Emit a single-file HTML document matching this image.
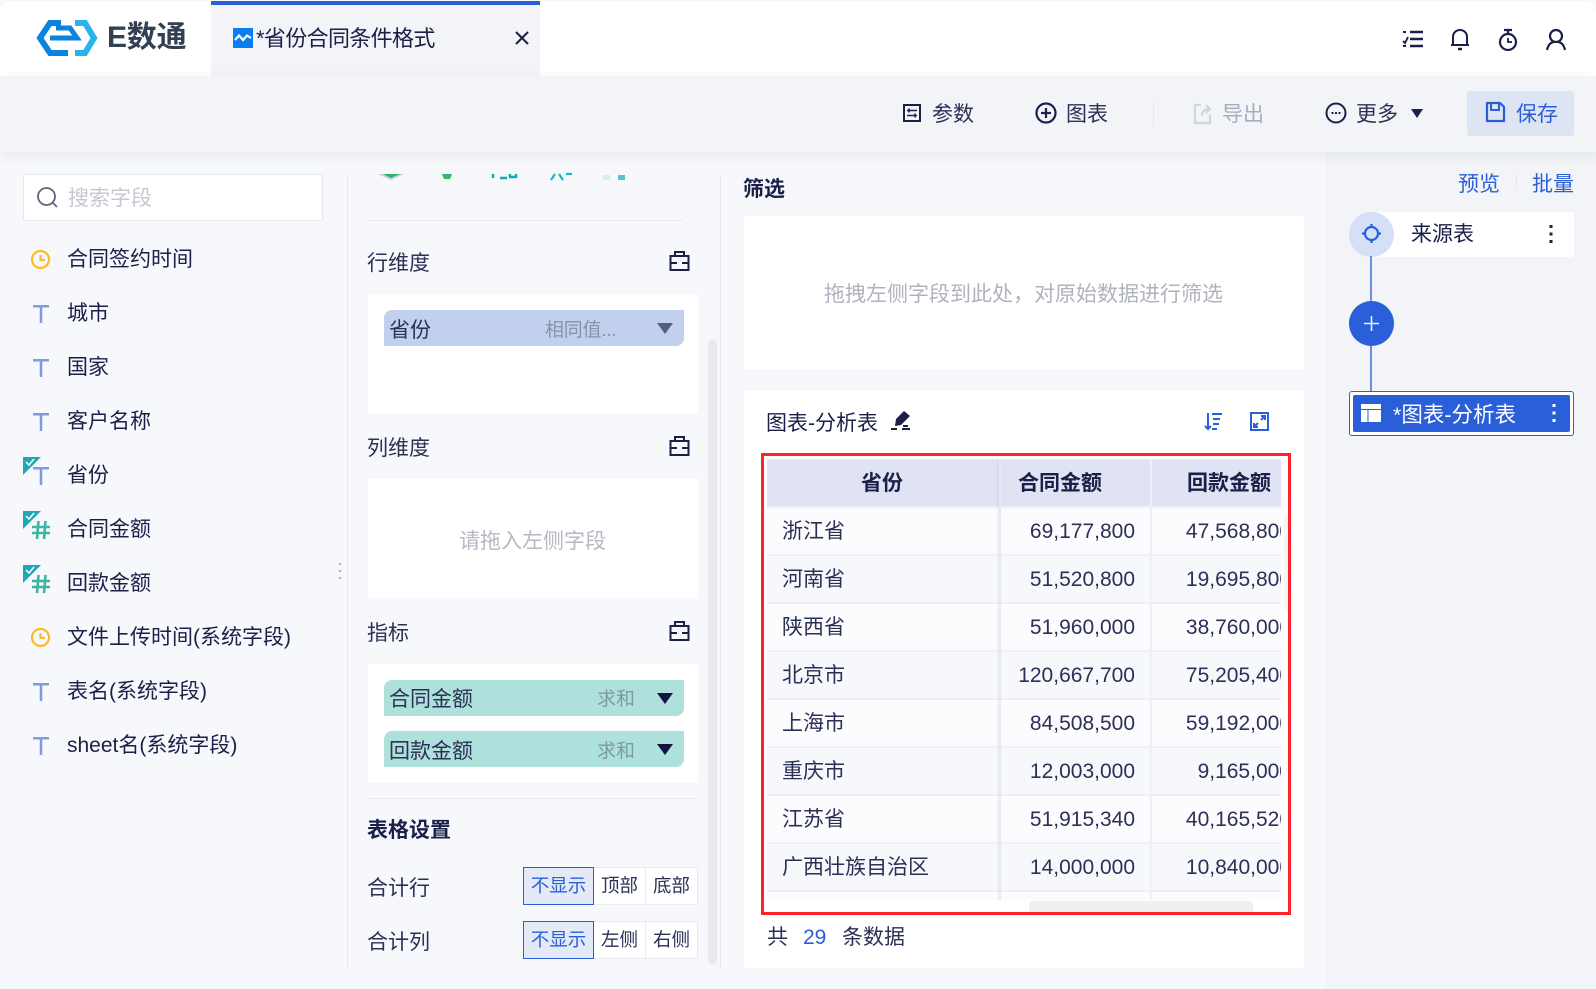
<!DOCTYPE html>
<html lang="zh-CN"><head><meta charset="utf-8"><title>省份合同条件格式</title>
<style>
*{box-sizing:border-box;margin:0;padding:0}
html,body{width:1596px;height:989px;overflow:hidden;background:#f7f8fb}
body{position:relative;font-family:"Liberation Sans","Noto Sans CJK SC",sans-serif;font-size:21px;color:#1a2048}
.a{position:absolute}
.t{position:absolute;white-space:nowrap;height:30px;line-height:30px;margin-top:1px}
svg{position:absolute;overflow:visible}
.w{position:absolute;background:#fff}
.pill{position:absolute;left:384px;width:300px;height:36px;border-radius:8px 0 8px 0}
.b{font-weight:bold}
.btn{position:absolute;height:38px;border:1px solid #e8eaf0;background:#fff;text-align:center;line-height:35px;font-size:18.500px;color:#2b3055}
.on{border:1.500px solid #2b5fd9;background:#e3e9f7;color:#2b5fd9;z-index:2}
</style></head><body>

<!-- header -->
<div class="w" style="left:0;top:1px;width:1596px;height:75px;border-radius:12px 12px 0 0"></div>
<div class="a" style="left:211px;top:1px;width:329px;height:75px;background:#f2f4f8;border-top:4px solid #2b5fd9"></div>

<svg style="left:37px;top:20px" width="60" height="36" viewBox="0 0 60 36">
<path d="M24 3H13L3 18L13 33H31" fill="none" stroke="#0b83dc" stroke-width="6"/>
<path d="M13 18H40L33 8H19" fill="none" stroke="#0b83dc" stroke-width="5"/>
<path d="M38 3H48L57 18L48 33H38" fill="none" stroke="#27b4ec" stroke-width="6"/>
</svg>
<div class="t b" style="left:107px;top:22px;font-size:30px;color:#333f52;letter-spacing:-.2px">E数通</div>

<svg style="left:233px;top:28px" width="20" height="20" viewBox="0 0 20 20"><rect width="20" height="20" fill="#0a7df0"/><path d="M2 12L6 7.500L10 12L14 7.500L18 10" fill="none" stroke="#fff" stroke-width="2.200"/></svg>
<div class="t" style="left:256px;top:23px;font-size:22px;letter-spacing:-.65px">*省份合同条件格式</div>
<svg style="left:515px;top:31px" width="14" height="14" viewBox="0 0 14 14"><path d="M1 1L13 13M13 1L1 13" stroke="#1a2048" stroke-width="2"/></svg>

<svg style="left:1402px;top:29px" width="22" height="20" viewBox="0 0 22 20" fill="none" stroke="#1a2048" stroke-width="2.600"><path d="M8 3H21M8 10H21M8 17H21"/><path d="M1 3H4M1 17H4M1 12L3 14L6 8" stroke-width="1.900"/></svg>
<svg style="left:1450px;top:28px" width="20" height="23" viewBox="0 0 20 23" fill="none" stroke="#1a2048" stroke-width="2"><path d="M3 17V9C3 5 6 2 10 2C14 2 17 5 17 9V17H19H1Z"/><path d="M8 21H12" stroke-width="2.500"/></svg>
<svg style="left:1498px;top:28px" width="20" height="24" viewBox="0 0 20 24" fill="none" stroke="#1a2048" stroke-width="2.200"><circle cx="10" cy="14" r="8"/><path d="M6 2H14M10 2V6" /><path d="M10 10V14H14" stroke-width="1.800"/></svg>
<svg style="left:1545px;top:28px" width="22" height="23" viewBox="0 0 22 23" fill="none" stroke="#1a2048" stroke-width="2.200"><circle cx="11" cy="8" r="6"/><path d="M2 22C3 17 6 14 9 14M20 22C19 17 16 14 13 14"/></svg>

<!-- toolbar -->
<div class="a" style="left:0;top:76px;width:1596px;height:76px;background:#f2f4f8;box-shadow:0 4px 12px rgba(40,50,90,.08);z-index:1"></div>
<div style="position:absolute;left:0;top:0;z-index:2;width:1596px;height:152px">
<svg style="left:903px;top:104px" width="18" height="18" viewBox="0 0 18 18" fill="none" stroke="#1a2048" stroke-width="2"><rect x="1" y="1" width="16" height="16"/><path d="M4 6.500H14M4 11.500H14" stroke-width="1.600"/><path d="M6 4.500V8.500M12 9.500V13.500" stroke-width="1.600"/></svg>
<div class="t" style="left:932px;top:99px;color:#2b3055">参数</div>
<svg style="left:1035px;top:102px" width="22" height="22" viewBox="0 0 22 22" fill="none" stroke="#1a2048" stroke-width="2.200"><circle cx="11" cy="11" r="9.500"/><path d="M6 11H16M11 6V16"/></svg>
<div class="t" style="left:1066px;top:99px;color:#2b3055">图表</div>
<div class="a" style="left:1153px;top:102px;width:1px;height:24px;background:#e4e6ee"></div>
<svg style="left:1193px;top:103px" width="20" height="21" viewBox="0 0 20 21" fill="none" stroke="#d2d4de" stroke-width="2.200"><path d="M8 2H2V20H17V11"/><path d="M9 13C9 9 11 6 16 6M13 2L17 6L13 10"/></svg>
<div class="t" style="left:1222px;top:99px;color:#a8acbc">导出</div>
<svg style="left:1325px;top:102px" width="22" height="22" viewBox="0 0 22 22"><circle cx="11" cy="11" r="9.500" fill="none" stroke="#1a2048" stroke-width="2"/><path d="M6.500 11H8.500M10 11H12M13.500 11H15.500" stroke="#1a2048" stroke-width="2"/></svg>
<div class="t" style="left:1356px;top:99px;color:#2b3055">更多</div>
<svg style="left:1411px;top:109px" width="12" height="9" viewBox="0 0 12 9"><path d="M0 0H12L6 9Z" fill="#1a2048"/></svg>
<div class="a" style="left:1467px;top:91px;width:107px;height:45px;background:#dde4f4;border-radius:3px"></div>
<svg style="left:1486px;top:102px" width="19" height="20" viewBox="0 0 19 20" fill="none" stroke="#2b5fd9" stroke-width="2.200"><path d="M1 1H14L18 5V19H1Z"/><path d="M5 1V8H13V1" stroke-width="2"/></svg>
<div class="t" style="left:1516px;top:99px;color:#2b5fd9">保存</div>
</div>

<!-- left panel -->
<div class="w" style="left:23px;top:174px;width:300px;height:47px;border:1px solid #e6e8ef;border-radius:2px"></div>
<svg style="left:36px;top:186px" width="23" height="23" viewBox="0 0 23 23" fill="none" stroke="#5c647e" stroke-width="1.800"><circle cx="10.500" cy="10.500" r="8.500"/><path d="M16.500 16.500L21 21"/></svg>
<div class="t" style="left:68px;top:183px;color:#c5c8d2">搜索字段</div>

<svg style="left:31px;top:250px" width="19" height="19" viewBox="0 0 19 19" fill="none" stroke="#fbbb29" stroke-width="2.200"><circle cx="9.500" cy="9.500" r="8.500"/><path d="M9.500 5V10H14"/></svg>
<div class="t" style="left:67px;top:244px">合同签约时间</div>
<svg style="left:33px;top:305px" width="16" height="18" viewBox="0 0 16 18"><path d="M0 1.200H16M8 1V18" stroke="#7d9be0" stroke-width="2.500"/></svg>
<div class="t" style="left:67px;top:298px">城市</div>
<svg style="left:33px;top:359px" width="16" height="18" viewBox="0 0 16 18"><path d="M0 1.200H16M8 1V18" stroke="#7d9be0" stroke-width="2.500"/></svg>
<div class="t" style="left:67px;top:352px">国家</div>
<svg style="left:33px;top:413px" width="16" height="18" viewBox="0 0 16 18"><path d="M0 1.200H16M8 1V18" stroke="#7d9be0" stroke-width="2.500"/></svg>
<div class="t" style="left:67px;top:406px">客户名称</div>

<svg style="left:33px;top:467px" width="16" height="18" viewBox="0 0 16 18"><path d="M0 1.200H16M8 1V18" stroke="#7d9be0" stroke-width="2.500"/></svg>
<svg style="left:23px;top:457px" width="18" height="18" viewBox="0 0 18 18"><path d="M0 0H18L0 18Z" fill="#1fa7b5"/><path d="M3 5L6 8L11 2" fill="none" stroke="#fff" stroke-width="1.500"/></svg>
<div class="t" style="left:67px;top:460px">省份</div>

<svg style="left:32px;top:521px" width="18" height="18" viewBox="0 0 18 18"><path d="M0 6H18M0 12H18M6.500 0L5 18M13.500 0L12 18" stroke="#3fb5a5" stroke-width="2.600" fill="none"/></svg>
<svg style="left:23px;top:511px" width="18" height="18" viewBox="0 0 18 18"><path d="M0 0H18L0 18Z" fill="#1fa7b5"/><path d="M3 5L6 8L11 2" fill="none" stroke="#fff" stroke-width="1.500"/></svg>
<div class="t" style="left:67px;top:514px">合同金额</div>

<svg style="left:32px;top:575px" width="18" height="18" viewBox="0 0 18 18"><path d="M0 6H18M0 12H18M6.500 0L5 18M13.500 0L12 18" stroke="#3fb5a5" stroke-width="2.600" fill="none"/></svg>
<svg style="left:23px;top:565px" width="18" height="18" viewBox="0 0 18 18"><path d="M0 0H18L0 18Z" fill="#1fa7b5"/><path d="M3 5L6 8L11 2" fill="none" stroke="#fff" stroke-width="1.500"/></svg>
<div class="t" style="left:67px;top:568px">回款金额</div>

<svg style="left:31px;top:628px" width="19" height="19" viewBox="0 0 19 19" fill="none" stroke="#fbbb29" stroke-width="2.200"><circle cx="9.500" cy="9.500" r="8.500"/><path d="M9.500 5V10H14"/></svg>
<div class="t" style="left:67px;top:622px">文件上传时间(系统字段)</div>
<svg style="left:33px;top:683px" width="16" height="18" viewBox="0 0 16 18"><path d="M0 1.200H16M8 1V18" stroke="#7d9be0" stroke-width="2.500"/></svg>
<div class="t" style="left:67px;top:676px">表名(系统字段)</div>
<svg style="left:33px;top:737px" width="16" height="18" viewBox="0 0 16 18"><path d="M0 1.200H16M8 1V18" stroke="#7d9be0" stroke-width="2.500"/></svg>
<div class="t" style="left:67px;top:730px">sheet名(系统字段)</div>

<svg style="left:338px;top:562px" width="4" height="18" viewBox="0 0 4 18"><path d="M2 1V3M2 8V10M2 15V17" stroke="#b5b8c4" stroke-width="2.500"/></svg>
<div class="a" style="left:347px;top:174px;width:1px;height:794px;background:#e8eaf0"></div>

<!-- middle panel -->
<svg style="left:378px;top:174px" width="270" height="7" viewBox="0 0 270 7">
<path d="M0 0H26L13 6Z" fill="#c9ccd3"/><path d="M5 0H22L13 4Z" fill="#2fb56a"/>
<path d="M64 0H74L72 5H66Z" fill="#2fba68"/>
<path d="M115 0V4M122 4H129M132 0V3H138V0" stroke="#11a9b3" stroke-width="2.400" fill="none"/>
<path d="M173 6L177 0M181 0L185 6M188 0H194" stroke="#19b7c4" stroke-width="2.200" fill="none"/>
<rect x="225" y="1" width="7" height="5" fill="#d2f0f3"/><rect x="240" y="1" width="7" height="5" fill="#55c3d0"/>
</svg>
<div class="a" style="left:367px;top:220px;width:316px;height:1px;background:#e8eaf0"></div>

<div class="t" style="left:367px;top:248px;color:#2b3055">行维度</div>
<svg style="left:669px;top:251px" width="21" height="20" viewBox="0 0 21 20" fill="none" stroke="#1a2048" stroke-width="2"><path d="M1.500 5H19.500V19H1.500ZM6 5V1H15V5M1.500 12H8M13 12H19.500"/></svg>
<div class="w" style="left:368px;top:294px;width:330px;height:119px"></div>
<div class="pill" style="top:310px;background:#c1d0ed"></div>
<div class="t" style="left:389px;top:315px;color:#2b3055">省份</div>
<div class="t" style="left:545px;top:315px;font-size:19px;color:#8a91ab;letter-spacing:-.25px">相同值...</div>
<svg style="left:657px;top:323px" width="16" height="11" viewBox="0 0 16 11"><path d="M0 0H16L8 11Z" fill="#555f85"/></svg>

<div class="t" style="left:367px;top:433px;color:#2b3055">列维度</div>
<svg style="left:669px;top:436px" width="21" height="20" viewBox="0 0 21 20" fill="none" stroke="#1a2048" stroke-width="2"><path d="M1.500 5H19.500V19H1.500ZM6 5V1H15V5M1.500 12H8M13 12H19.500"/></svg>
<div class="w" style="left:368px;top:479px;width:330px;height:119px"></div>
<div class="t" style="left:459px;top:526px;color:#b5b8c4">请拖入左侧字段</div>

<div class="t" style="left:367px;top:618px;color:#2b3055">指标</div>
<svg style="left:669px;top:621px" width="21" height="20" viewBox="0 0 21 20" fill="none" stroke="#1a2048" stroke-width="2"><path d="M1.500 5H19.500V19H1.500ZM6 5V1H15V5M1.500 12H8M13 12H19.500"/></svg>
<div class="w" style="left:368px;top:664px;width:330px;height:119px"></div>
<div class="pill" style="top:680px;background:#aee1dc"></div>
<div class="t" style="left:389px;top:684px;color:#2b3055">合同金额</div>
<div class="t" style="left:597px;top:684px;font-size:19px;color:#7d9aa4">求和</div>
<svg style="left:657px;top:693px" width="16" height="11" viewBox="0 0 16 11"><path d="M0 0H16L8 11Z" fill="#101540"/></svg>
<div class="pill" style="top:731px;background:#aee1dc"></div>
<div class="t" style="left:389px;top:736px;color:#2b3055">回款金额</div>
<div class="t" style="left:597px;top:736px;font-size:19px;color:#7d9aa4">求和</div>
<svg style="left:657px;top:744px" width="16" height="11" viewBox="0 0 16 11"><path d="M0 0H16L8 11Z" fill="#101540"/></svg>

<div class="a" style="left:368px;top:798px;width:330px;height:1px;background:#e8eaf0"></div>
<div class="t b" style="left:367px;top:815px;color:#1a2048">表格设置</div>

<div class="t" style="left:367px;top:873px;color:#2b3055">合计行</div>
<div class="btn on" style="left:523px;top:867px;width:71px">不显示</div>
<div class="btn" style="left:593px;top:867px;width:53px">顶部</div>
<div class="btn" style="left:645px;top:867px;width:53px">底部</div>
<div class="t" style="left:367px;top:927px;color:#2b3055">合计列</div>
<div class="btn on" style="left:523px;top:921px;width:71px">不显示</div>
<div class="btn" style="left:593px;top:921px;width:53px">左侧</div>
<div class="btn" style="left:645px;top:921px;width:53px">右侧</div>

<div class="a" style="left:708px;top:339px;width:9px;height:626px;background:#e9eaee;border-radius:5px"></div>
<div class="a" style="left:720px;top:174px;width:1px;height:794px;background:#e8eaf0"></div>

<!-- center -->
<div class="t b" style="left:743px;top:174px;color:#1a2048">筛选</div>
<div class="w" style="left:744px;top:216px;width:560px;height:153px"></div>
<div class="t" style="left:824px;top:279px;color:#b0b3be">拖拽左侧字段到此处，对原始数据进行筛选</div>

<div class="w" style="left:744px;top:391px;width:560px;height:577px"></div>
<div class="t" style="left:766px;top:408px">图表-分析表</div>
<svg style="left:891px;top:411px" width="20" height="20" viewBox="0 0 20 20"><path d="M13 0L19 5L10 14L4 15L5 8Z" fill="#1a2048"/><path d="M0 18H6M11 18H19M12 15H17" stroke="#1a2048" stroke-width="2"/></svg>
<svg style="left:1204px;top:412px" width="18" height="19" viewBox="0 0 18 19" fill="none" stroke="#2b5fd9" stroke-width="2"><path d="M4 1V17M1 14L4 17L7 14"/><path d="M8 2H18M9 7H16M9 12H15M8 17H13"/></svg>
<svg style="left:1250px;top:412px" width="19" height="19" viewBox="0 0 19 19" fill="none" stroke="#2b5fd9" stroke-width="2"><rect x="1" y="1" width="17" height="17"/><path d="M11 8L15 4M11 4H15V8M8 11L4 15M4 11V15H8"/></svg>

<!-- table -->
<div class="a" style="left:767px;top:459px;width:514px;height:441px;overflow:hidden;background:#fff">
 <div class="a" style="left:0;top:0;width:514px;height:47px;background:#dfe3f3"></div>
 <div class="a" style="left:0;top:47px;width:514px;height:394px;background:#fcfcfe"></div>
 <div class="a" style="left:0;top:95px;width:514px;height:48px;background:#f7f8fc"></div>
 <div class="a" style="left:0;top:191px;width:514px;height:48px;background:#f7f8fc"></div>
 <div class="a" style="left:0;top:287px;width:514px;height:48px;background:#f7f8fc"></div>
 <div class="a" style="left:0;top:383px;width:514px;height:48px;background:#f7f8fc"></div>
 <div class="a" style="left:0;top:47px;width:514px;height:1.500px;background:#eef0f8"></div>
 <div class="a" style="left:0;top:95px;width:514px;height:1.500px;background:#eef0f8"></div>
 <div class="a" style="left:0;top:143px;width:514px;height:1.500px;background:#eef0f8"></div>
 <div class="a" style="left:0;top:191px;width:514px;height:1.500px;background:#eef0f8"></div>
 <div class="a" style="left:0;top:239px;width:514px;height:1.500px;background:#eef0f8"></div>
 <div class="a" style="left:0;top:287px;width:514px;height:1.500px;background:#eef0f8"></div>
 <div class="a" style="left:0;top:335px;width:514px;height:1.500px;background:#eef0f8"></div>
 <div class="a" style="left:0;top:383px;width:514px;height:1.500px;background:#eef0f8"></div>
 <div class="a" style="left:0;top:431px;width:514px;height:1.500px;background:#eef0f8"></div>
 <div class="a" style="left:232px;top:0;width:1.500px;height:441px;background:#e7e9f3;box-shadow:-1px 0 2px rgba(60,70,120,.1)"></div>
 <div class="a" style="left:383px;top:0;width:1.500px;height:441px;background:#eef0f8"></div>

 <div class="t b" style="left:94px;top:9px">省份</div>
 <div class="t b" style="left:251px;top:9px">合同金额</div>
 <div class="t b" style="left:420px;top:9px">回款金额</div>

 <div class="t" style="left:15px;top:57px;color:#2b3055">浙江省</div>
 <div class="t" style="left:15px;top:105px;color:#2b3055">河南省</div>
 <div class="t" style="left:15px;top:153px;color:#2b3055">陕西省</div>
 <div class="t" style="left:15px;top:201px;color:#2b3055">北京市</div>
 <div class="t" style="left:15px;top:249px;color:#2b3055">上海市</div>
 <div class="t" style="left:15px;top:297px;color:#2b3055">重庆市</div>
 <div class="t" style="left:15px;top:345px;color:#2b3055">江苏省</div>
 <div class="t" style="left:15px;top:393px;color:#2b3055">广西壮族自治区</div>

 <div class="t" style="right:146px;top:57px;color:#2b3055">69,177,800</div>
 <div class="t" style="right:146px;top:105px;color:#2b3055">51,520,800</div>
 <div class="t" style="right:146px;top:153px;color:#2b3055">51,960,000</div>
 <div class="t" style="right:146px;top:201px;color:#2b3055">120,667,700</div>
 <div class="t" style="right:146px;top:249px;color:#2b3055">84,508,500</div>
 <div class="t" style="right:146px;top:297px;color:#2b3055">12,003,000</div>
 <div class="t" style="right:146px;top:345px;color:#2b3055">51,915,340</div>
 <div class="t" style="right:146px;top:393px;color:#2b3055">14,000,000</div>

 <div class="t" style="right:-10px;top:57px;color:#2b3055">47,568,800</div>
 <div class="t" style="right:-10px;top:105px;color:#2b3055">19,695,800</div>
 <div class="t" style="right:-10px;top:153px;color:#2b3055">38,760,000</div>
 <div class="t" style="right:-10px;top:201px;color:#2b3055">75,205,400</div>
 <div class="t" style="right:-10px;top:249px;color:#2b3055">59,192,000</div>
 <div class="t" style="right:-10px;top:297px;color:#2b3055">9,165,000</div>
 <div class="t" style="right:-10px;top:345px;color:#2b3055">40,165,520</div>
 <div class="t" style="right:-10px;top:393px;color:#2b3055">10,840,000</div>
</div>
<div class="a" style="left:1029px;top:901px;width:224px;height:12px;background:#eeeff1;border-radius:4px 4px 0 0"></div>
<div class="a" style="left:1284px;top:513px;width:7px;height:98px;background:#f4f5f7;border-radius:3px"></div>
<div class="a" style="left:761px;top:453px;width:530px;height:462px;border:3px solid #ff2229"></div>

<div class="t" style="left:767px;top:922px;color:#2b3055">共</div>
<div class="t" style="left:803px;top:922px;color:#2b5fd9">29</div>
<div class="t" style="left:842px;top:922px;color:#2b3055">条数据</div>

<!-- right panel -->
<div class="a" style="left:1326px;top:152px;width:270px;height:837px;background:#f2f4f8"></div>
<div class="t" style="left:1458px;top:169px;color:#2b5fd9">预览</div>
<div class="a" style="left:1516px;top:174px;width:1px;height:16px;background:#e4e6ee"></div>
<div class="t" style="left:1532px;top:169px;color:#2b5fd9">批量</div>
<div class="w" style="left:1371px;top:212px;width:203px;height:45px;border-radius:0 3px 3px 0"></div>
<div class="a" style="left:1349px;top:212px;width:45px;height:45px;border-radius:50%;background:#d5dff6"></div>
<svg style="left:1361px;top:223px" width="21" height="21" viewBox="0 0 21 21" fill="none" stroke="#2b5fd9" stroke-width="2.200"><circle cx="10.500" cy="10.500" r="6.500"/><path d="M10.500 1V5M10.500 16V20M1 10.500H5M16 10.500H20"/></svg>
<div class="t" style="left:1411px;top:219px">来源表</div>
<svg style="left:1549px;top:225px" width="4" height="18" viewBox="0 0 4 18"><path d="M2 0V3M2 7.500V10.500M2 15V18" stroke="#1a2048" stroke-width="3"/></svg>
<div class="a" style="left:1370px;top:256px;width:2px;height:136px;background:#6c8edc"></div>
<div class="a" style="left:1349px;top:301px;width:45px;height:45px;border-radius:50%;background:#2b5fd9"></div>
<svg style="left:1364px;top:316px" width="15" height="15" viewBox="0 0 15 15"><path d="M0 7.500H15M7.500 0V15" stroke="#e9eefb" stroke-width="1.600"/></svg>
<div class="a" style="left:1349px;top:391px;width:225px;height:45px;border:1.500px solid #2b5fd9;border-radius:3px;background:#fff"></div>
<div class="a" style="left:1353px;top:395px;width:217px;height:37px;background:#2b5fd9;border-radius:2px"></div>
<svg style="left:1361px;top:404px" width="20" height="18" viewBox="0 0 20 18"><rect width="20" height="18" fill="#fff"/><path d="M0 5.500H20M7 5.500V18" stroke="#2b5fd9" stroke-width="1"/></svg>
<div class="t" style="left:1393px;top:399px;color:#fff;font-size:21.500px">*图表-分析表</div>
<svg style="left:1552px;top:404px" width="4" height="18" viewBox="0 0 4 18"><path d="M2 0V3M2 7.500V10.500M2 15V18" stroke="#fff" stroke-width="3"/></svg>
</body></html>
